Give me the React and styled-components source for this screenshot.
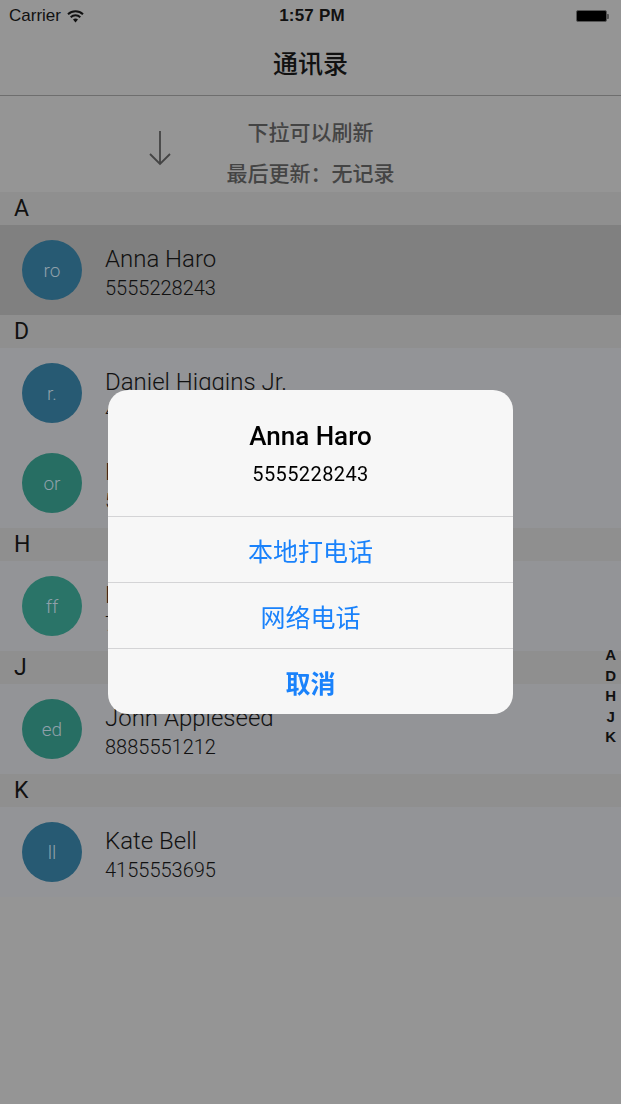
import React from "react";
import styled, { createGlobalStyle } from "styled-components";

const GlobalStyle = createGlobalStyle`
  html, body {
    margin: 0;
    padding: 0;
    background: #959595;
    font-family: Roboto, "Noto Sans CJK SC", sans-serif;
  }
`;

const contacts = [
  { letter: "A", people: [{ name: "Anna Haro", phone: "5555228243", tag: "ro", color: "#275a73", active: true }] },
  {
    letter: "D",
    people: [
      { name: "Daniel Higgins Jr.", phone: "4085555270", tag: "r.", color: "#275a73" },
      { name: "David Taylor", phone: "5556106679", tag: "or", color: "#276e63" }
    ]
  },
  { letter: "H", people: [{ name: "Hank M. Zakroff", phone: "7075551854", tag: "ff", color: "#2a7468" }] },
  { letter: "J", people: [{ name: "John Appleseed", phone: "8885551212", tag: "ed", color: "#276e63" }] },
  { letter: "K", people: [{ name: "Kate Bell", phone: "4155553695", tag: "ll", color: "#275a73" }] }
];

const Screen = styled.div`
  width: 621px;
  min-height: 1104px;
  background: #959595;
  position: relative;
  overflow: hidden;
`;

const StatusBar = styled.div`
  height: 30px;
  display: grid;
  grid-template-columns: 1fr auto 1fr;
  align-items: center;
  padding: 2px 12px 0 9px;
  box-sizing: border-box;
  font-family: "Liberation Sans", Roboto, sans-serif;
  font-size: 17px;
  color: #111;
`;

const Carrier = styled.div`
  display: flex;
  align-items: center;
  gap: 6px;
`;

const Clock = styled.div`
  font-weight: 700;
  letter-spacing: 0.2px;
  padding-left: 6px;
`;

const Battery = styled.div`
  justify-self: end;
  display: flex;
  align-items: center;
  &::before {
    content: "";
    width: 29px;
    height: 10px;
    background: #000;
    border: 1.5px solid #555;
    border-radius: 2px;
  }
  &::after {
    content: "";
    width: 2px;
    height: 5px;
    background: #555;
    border-radius: 0 1px 1px 0;
  }
`;

const NavBar = styled.div`
  height: 66px;
  display: flex;
  align-items: center;
  justify-content: center;
  border-bottom: 1px solid #6e6e6e;
  font-family: "Noto Sans CJK SC", sans-serif;
  font-size: 25px;
  font-weight: 500;
  color: #111;
  padding-bottom: 2px;
  box-sizing: border-box;
`;

const Refresh = styled.div`
  height: 96px;
  position: relative;
  display: flex;
  flex-direction: column;
  align-items: center;
  justify-content: center;
  gap: 11px;
  padding-top: 14px;
  box-sizing: border-box;
  font-family: "Noto Sans CJK SC", sans-serif;
  font-size: 21px;
  color: #444;
`;

const RefreshLine = styled.div`
  line-height: 30px;
  font-weight: 500;
`;

const Arrow = styled.svg`
  position: absolute;
  left: 145px;
  top: 33px;
`;

const SectionHeader = styled.div`
  height: 33px;
  display: flex;
  align-items: center;
  padding-left: 14px;
  background: #8f8f8f;
  font-size: 23px;
  color: #111;
`;

const Row = styled.div`
  height: 90px;
  display: flex;
  align-items: center;
  padding-left: 22px;
  gap: 23px;
  background: ${(p) => (p.$active ? "#808080" : "#939497")};
`;

const Avatar = styled.div`
  width: 60px;
  height: 60px;
  border-radius: 50%;
  background: ${(p) => p.$color};
  color: #8fa0aa;
  display: flex;
  align-items: center;
  justify-content: center;
  font-size: 19px;
  font-weight: 300;
`;

const Info = styled.div`
  display: flex;
  flex-direction: column;
  gap: 1px;
  padding-top: 4px;
  color: #111;
  font-weight: 300;
`;

const Name = styled.div`
  font-size: 24px;
  line-height: 30px;
`;

const Phone = styled.div`
  font-size: 20px;
  line-height: 26px;
`;

const IndexBar = styled.div`
  position: absolute;
  right: 5px;
  top: 645px;
  display: flex;
  flex-direction: column;
  align-items: center;
  font-family: "Liberation Sans", sans-serif;
  font-weight: 700;
  font-size: 15px;
  line-height: 20.5px;
  color: #111;
`;

const Overlay = styled.div`
  position: fixed;
  inset: 0;
  display: flex;
  align-items: center;
  justify-content: center;
`;

const Alert = styled.div`
  width: 405px;
  background: #f7f7f7;
  border-radius: 20px;
  overflow: hidden;
  display: flex;
  flex-direction: column;
`;

const AlertBody = styled.div`
  height: 126px;
  display: flex;
  flex-direction: column;
  align-items: center;
  padding-top: 30px;
  box-sizing: border-box;
  color: #000;
`;

const AlertTitle = styled.div`
  font-family: Roboto, sans-serif;
  font-weight: 500;
  font-size: 26px;
  line-height: 32px;
`;

const AlertMessage = styled.div`
  font-family: Roboto, sans-serif;
  font-size: 20px;
  line-height: 26px;
  margin-top: 9px;
  letter-spacing: 0.4px;
`;

const AlertButton = styled.div`
  height: 65px;
  border-top: 1px solid #d4d4d6;
  display: flex;
  align-items: center;
  justify-content: center;
  font-family: "Noto Sans CJK SC", sans-serif;
  font-size: 25px;
  font-weight: ${(p) => (p.$bold ? 700 : 400)};
  color: #1a82fb;
`;

const WifiIcon = () => (
  <svg width="17" height="13" viewBox="0 0 17 13">
    <path d="M8.5 12.5 L11 9.6 A4 4 0 0 0 6 9.6 Z" fill="#111" />
    <path d="M3.7 7.2 A7 7 0 0 1 13.3 7.2" stroke="#111" strokeWidth="2" fill="none" />
    <path d="M1 4.3 A11 11 0 0 1 16 4.3" stroke="#111" strokeWidth="2" fill="none" />
  </svg>
);

export default function App() {
  return (
    <>
      <GlobalStyle />
      <Screen>
        <StatusBar>
          <Carrier>
            Carrier <WifiIcon />
          </Carrier>
          <Clock>1:57 PM</Clock>
          <Battery />
        </StatusBar>
        <NavBar>通讯录</NavBar>
        <Refresh>
          <Arrow width="30" height="40" viewBox="0 0 30 40">
            <path d="M15 2 V35 M5 25 L15 35 L25 25" stroke="#444" strokeWidth="1.8" fill="none" />
          </Arrow>
          <RefreshLine>下拉可以刷新</RefreshLine>
          <RefreshLine>最后更新：无记录</RefreshLine>
        </Refresh>
        {contacts.map((section) => (
          <React.Fragment key={section.letter}>
            <SectionHeader>{section.letter}</SectionHeader>
            {section.people.map((p) => (
              <Row key={p.name} $active={p.active}>
                <Avatar $color={p.color}>{p.tag}</Avatar>
                <Info>
                  <Name>{p.name}</Name>
                  <Phone>{p.phone}</Phone>
                </Info>
              </Row>
            ))}
          </React.Fragment>
        ))}
        <IndexBar>
          {contacts.map((s) => (
            <div key={s.letter}>{s.letter}</div>
          ))}
        </IndexBar>
      </Screen>
      <Overlay>
        <Alert>
          <AlertBody>
            <AlertTitle>Anna Haro</AlertTitle>
            <AlertMessage>5555228243</AlertMessage>
          </AlertBody>
          <AlertButton>本地打电话</AlertButton>
          <AlertButton>网络电话</AlertButton>
          <AlertButton $bold>取消</AlertButton>
        </Alert>
      </Overlay>
    </>
  );
}
